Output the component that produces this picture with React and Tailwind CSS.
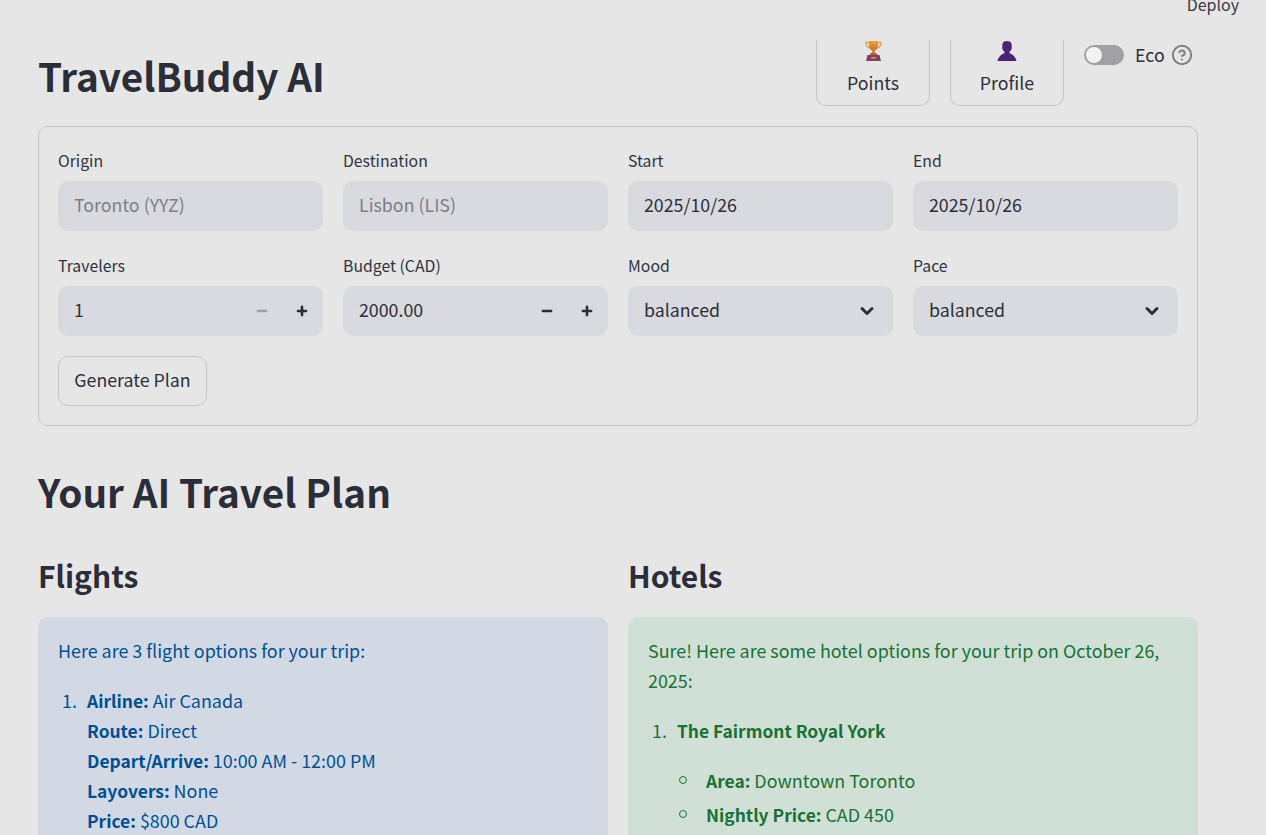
import React from 'react'
import { ChevronDown, Minus, Plus, CircleHelp } from 'lucide-react'

const font = { fontFamily: '"Noto Sans CJK SC", "Noto Sans", sans-serif' }

const Trophy = () => (
  <svg width="17" height="20" viewBox="0 0 17 20">
    <defs>
      <linearGradient id="cup" x1="0" y1="0" x2="0" y2="1">
        <stop offset="0" stopColor="#eda52f" />
        <stop offset="1" stopColor="#c2662c" />
      </linearGradient>
    </defs>
    <path d="M1 1.500h15c0 3.500-1.500 5-4 5.500H5C2.500 6.500 1 5 1 1.500z" fill="none" stroke="#dca548" strokeWidth="1.500" />
    <path d="M4 0h9v5c0 2.500-2 4-3.300 4.500V12H7.300V9.500C6 9 4 7.500 4 5z" fill="url(#cup)" />
    <path d="M5.500 12h6l.8 2H4.700z" fill="#b9603a" />
    <path d="M2.500 14h12l1.500 6H1z" fill="#80405f" />
    <path d="M6 16h5v1.500H6z" fill="#d99a4e" />
  </svg>
)

const Person = () => (
  <svg width="20" height="20" viewBox="0 0 20 20">
    <path d="M5.500 2.500C6 .8 8 0 10 0s4 .8 4.500 2.500l.3 4c0 2-1.300 3.500-2.300 4.300v1.400c3 .7 6 3.500 7 7.800H.5c1-4.300 4-7.100 7-7.800v-1.400C6.500 10 5.200 8.500 5.200 6.500z" fill="#4a2375" />
  </svg>
)

const Field = ({ label, children, right }) => (
  <div className="flex flex-col">
    <div className="h-[22px] mb-[9px] text-[15.8px] leading-[22px] text-[#30333f]">{label}</div>
    <div className="h-[50px] rounded-[10px] bg-[#d9dadf] flex items-center pl-4 pr-3 text-[17.8px] text-[#2d2f3a]">
      <div className="flex-1 pb-[3px]">{children}</div>
      {right}
    </div>
  </div>
)

const Stepper = ({ dim }) => (
  <div className="flex items-center gap-[26px] pr-[2px]">
    <Minus size={14} strokeWidth={4.5} className={dim ? 'text-[#a0a1a7]' : 'text-[#2d2f3a]'} />
    <Plus size={14} strokeWidth={4.5} className="text-[#2d2f3a]" />
  </div>
)

const Chevron = () => <ChevronDown size={20} strokeWidth={3.6} className="text-[#2d2f3a] mr-[4px]" />

const Muted = ({ children }) => <span className="text-[#7d7f88]">{children}</span>

const Num = ({ children }) => <span className="w-[29px] shrink-0 pl-[4px]">{children}</span>

const Bold = ({ children }) => <b className="font-semibold text-[17.4px] leading-none">{children}</b>

const Bullet = ({ children }) => (
  <div className="flex items-center pl-[2px]">
    <span className="w-[8px] h-[8px] rounded-full border border-[#177233] mr-[19px]" />
    <span>{children}</span>
  </div>
)

export default function App() {
  return (
    <div style={font} className="h-[835px] w-[1266px] overflow-hidden bg-[#e6e6e6] text-[#2d2f3a]">
      {/* Top bar, mostly scrolled away */}
      <div className="h-10 flex justify-end pr-[27px]">
        <span className="text-[16px] leading-[22px] h-[14px] -mt-[7px] text-[#3a3a45]">Deploy</span>
      </div>

      <div className="w-[1160px] ml-[38px]">
        {/* Title row */}
        <div className="h-[86px] flex">
          <h1 className="flex-1 text-[38.7px] leading-[70px] font-semibold text-[#2b2d38]">TravelBuddy AI</h1>
          <div className="flex gap-5 h-[66px]">
            <button className="w-[114px] border border-t-0 border-[#c6c6c6] rounded-b-[10px] flex flex-col items-center text-[17.8px] pt-px">
              <Trophy />
              <span className="mt-[7px] leading-[28px]">Points</span>
            </button>
            <button className="w-[114px] border border-t-0 border-[#c6c6c6] rounded-b-[10px] flex flex-col items-center text-[17.8px] pt-px">
              <Person />
              <span className="mt-[7px] leading-[28px]">Profile</span>
            </button>
          </div>
          <div className="w-[134px] flex items-start pl-5 pt-[5px]">
            <div className="w-10 h-5 rounded-full bg-[#a0a0a5] p-[2px]">
              <div className="w-4 h-4 rounded-full bg-[#f2f2f2]" />
            </div>
            <span className="ml-[11px] text-[17.8px] leading-[18px]">Eco</span>
            <CircleHelp size={22} strokeWidth={2.2} className="ml-[6px] -mt-px text-[#7f7f85]" />
          </div>
        </div>

        {/* Search form */}
        <div className="h-[300px] border border-[#c6c6c6] rounded-[10px] p-[19px] pt-[23px]">
          <div className="grid grid-cols-4 gap-x-5 gap-y-[24px]">
            <Field label="Origin"><Muted>Toronto (YYZ)</Muted></Field>
            <Field label="Destination"><Muted>Lisbon (LIS)</Muted></Field>
            <Field label="Start">2025/10/26</Field>
            <Field label="End">2025/10/26</Field>
            <Field label="Travelers" right={<Stepper dim />}>1</Field>
            <Field label="Budget (CAD)" right={<Stepper />}>2000.00</Field>
            <Field label="Mood" right={<Chevron />}>balanced</Field>
            <Field label="Pace" right={<Chevron />}>balanced</Field>
          </div>
          <button className="mt-5 w-[149px] h-[50px] border border-[#c6c6c6] rounded-[10px] text-[17.8px] pb-[3px]">Generate Plan</button>
        </div>

        <h1 className="mt-[30px] text-[38.7px] leading-[70px] font-semibold text-[#2b2d38]">Your AI Travel Plan</h1>

        {/* Results */}
        <div className="mt-[26px] grid grid-cols-2 gap-5">
          <div>
            <h2 className="text-[30px] leading-[46px] font-semibold text-[#2b2d38]">Flights</h2>
            <div className="mt-[19px] h-[300px] rounded-[10px] bg-[#d2d9e5] text-[#004f96] text-[17.9px] leading-[30px] px-5 pt-[18px]">
              <p>Here are 3 flight options for your trip:</p>
              <div className="mt-5 flex">
                <Num>1.</Num>
                <div>
                  <Bold>Airline:</Bold> Air Canada<br />
                  <Bold>Route:</Bold> Direct<br />
                  <Bold>Depart/Arrive:</Bold> 10:00 AM - 12:00 PM<br />
                  <Bold>Layovers:</Bold> None<br />
                  <Bold>Price:</Bold> $800 CAD
                </div>
              </div>
            </div>
          </div>
          <div>
            <h2 className="text-[30px] leading-[46px] font-semibold text-[#2b2d38]">Hotels</h2>
            <div className="mt-[19px] h-[300px] rounded-[10px] bg-[#d1e0d6] text-[#177233] text-[17.9px] leading-[30px] px-5 pt-[18px]">
              <p>Sure! Here are some hotel options for your trip on October 26, 2025:</p>
              <div className="mt-5 flex">
                <Num>1.</Num>
                <div>
                  <Bold>The Fairmont Royal York</Bold>
                  <div className="mt-5 flex flex-col gap-1">
                    <Bullet><Bold>Area:</Bold> Downtown Toronto</Bullet>
                    <Bullet><Bold>Nightly Price:</Bold> CAD 450</Bullet>
                  </div>
                </div>
              </div>
            </div>
          </div>
        </div>
      </div>
    </div>
  )
}
